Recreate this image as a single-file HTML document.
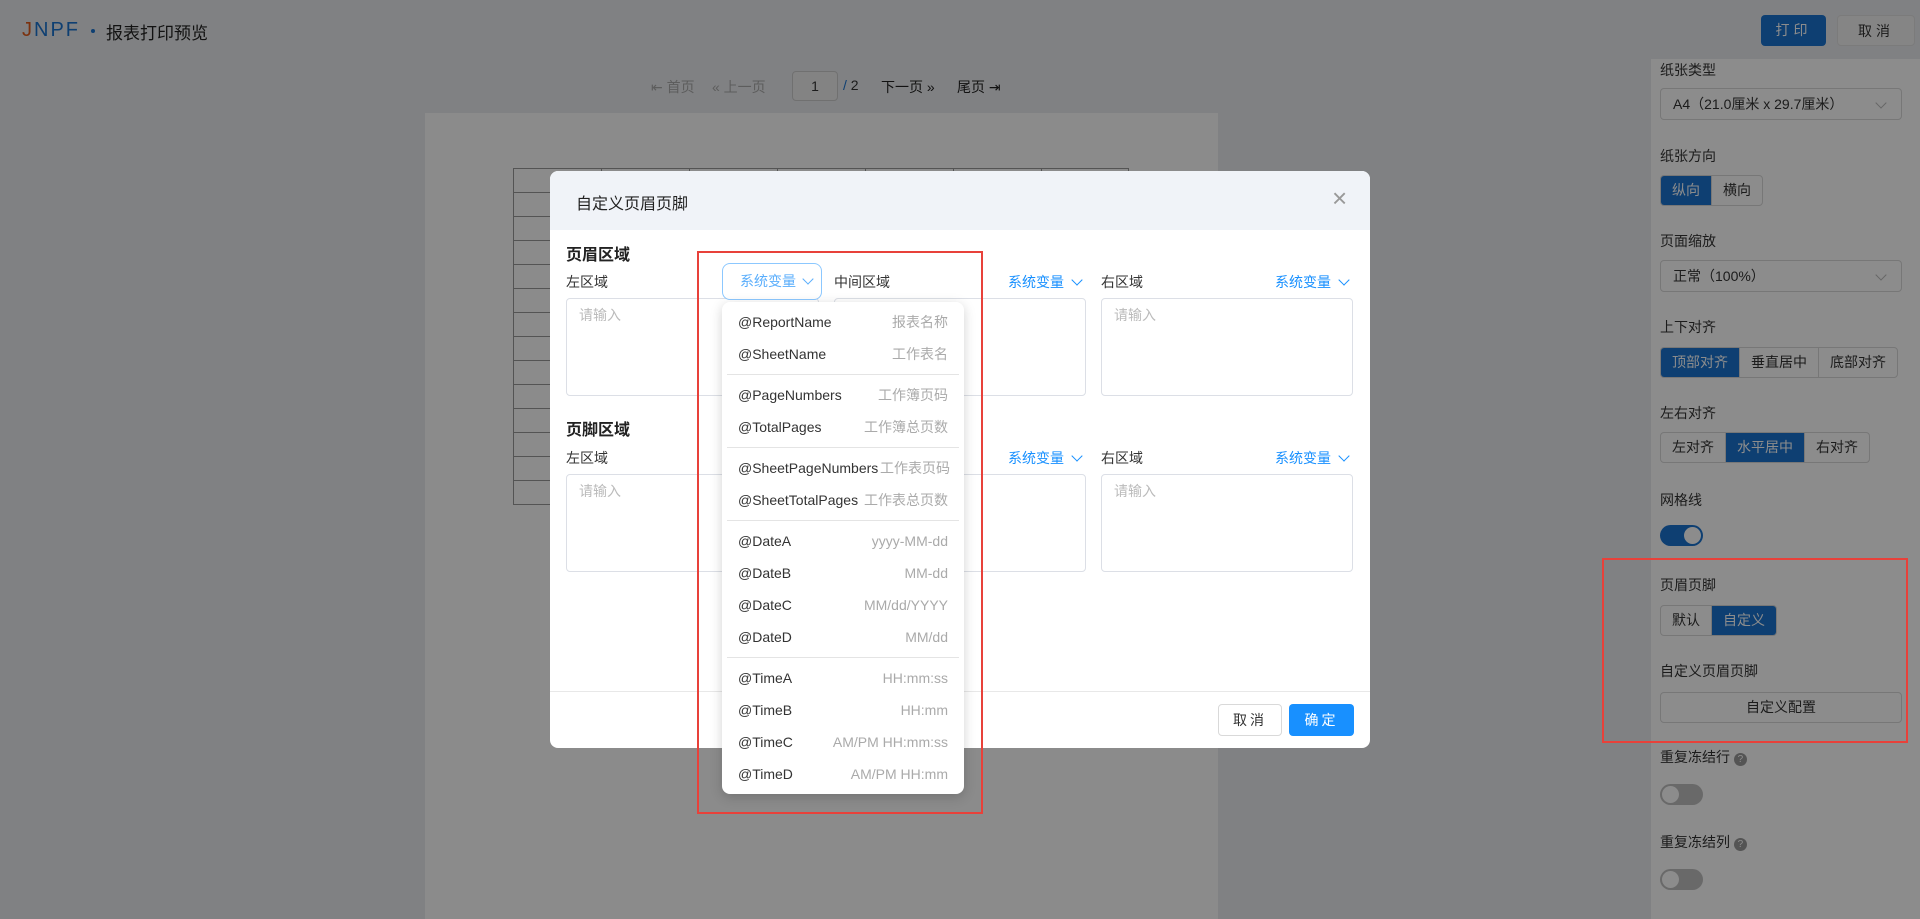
<!DOCTYPE html>
<html><head><meta charset="utf-8">
<style>
*{box-sizing:border-box;margin:0;padding:0}
body{width:1920px;height:919px;overflow:hidden;position:relative;background:#e9ebee;font-family:"Liberation Sans","Noto Sans CJK SC",sans-serif;font-size:14px;color:#333}
.a{position:absolute}
.btn{position:absolute;border-radius:4px;text-align:center;font-size:14px}
.lbl{position:absolute;font-size:14px;color:#333;line-height:20px}
.seg{position:absolute;display:flex;border:1px solid #d9d9d9;border-radius:4px;overflow:hidden;height:31px}
.seg div{padding:0 11px;line-height:29px;border-left:1px solid #d9d9d9;font-size:14px;color:#333}
.seg div:first-child{border-left:none}
.seg .on{background:#1a73d0;color:#fff}
.sel{position:absolute;border:1px solid #d9d9d9;border-radius:4px;height:32px;line-height:30px;padding-left:12px;font-size:14px;background:#fff}
.sel:after{content:"";position:absolute;right:16px;top:10px;width:7px;height:7px;border-right:1px solid #bbb;border-bottom:1px solid #bbb;transform:rotate(45deg)}
.sw{position:absolute;width:43px;height:21px;border-radius:11px;background:#bfbfbf}
.sw:after{content:"";position:absolute;top:2px;left:2px;width:17px;height:17px;border-radius:50%;background:#fff}
.sw.on{background:#1a73d0}.sw.on:after{left:24px}
.ta{position:absolute;border:1px solid #dcdfe6;border-radius:4px;background:#fff;color:#bbb;padding:6px 12px;font-size:14px;line-height:20px}
.sv{position:absolute;color:#1890ff;font-size:14px;line-height:20px}
.chev{display:inline-block;width:8px;height:8px;border-right:1.5px solid #1890ff;border-bottom:1.5px solid #1890ff;transform:rotate(45deg);margin-left:9px;position:relative;top:-3px}
.dd div.it{height:32px;display:flex;justify-content:space-between;align-items:center;padding:0 16px;font-size:14px;color:#333}
.dd div.it span{color:#aaa}
.dd .hr{height:1px;background:#e4e4e4;margin:4px 5px}
</style></head><body>
<div class="a" style="left:22px;top:19px;font-size:20px;letter-spacing:2px;color:#1a73d0;font-family:'Liberation Sans',sans-serif"><span style="color:#e05a1a">J</span>NPF</div>
<div class="a" style="left:91px;top:29px;width:4px;height:4px;border-radius:50%;background:#1a73d0"></div>
<div class="a" style="left:106px;top:19px;font-size:17px;color:#222">报表打印预览</div>
<div class="btn" style="left:1761px;top:15px;width:65px;height:31px;line-height:31px;background:#1a73d0;color:#fff;letter-spacing:4px">打印</div>
<div class="btn" style="left:1837px;top:15px;width:78px;height:31px;line-height:31px;background:#f3f3f3;border:1px solid #e0e0e0;letter-spacing:4px">取消</div>
<div class="a" style="left:651px;top:77px;color:#aaa;font-size:14px">⇤ 首页</div>
<div class="a" style="left:712px;top:77px;color:#aaa;font-size:14px">« 上一页</div>
<div class="a" style="left:792px;top:71px;width:46px;height:30px;border:1px solid #ccc;border-radius:4px;background:#eee;text-align:center;line-height:28px">1</div>
<div class="a" style="left:843px;top:77px;font-size:14px"><span style="color:#1a73d0">/</span> 2</div>
<div class="a" style="left:881px;top:77px;font-size:14px;color:#222">下一页 »</div>
<div class="a" style="left:957px;top:77px;font-size:14px;color:#222">尾页 ⇥</div>
<div class="a" style="left:425px;top:113px;width:793px;height:806px;background:#fefefe"></div>
<div class="a" style="left:513px;top:168px;width:616px;height:337px;background-image:linear-gradient(#999 1px,transparent 1px),linear-gradient(90deg,#999 1px,transparent 1px);background-size:88px 24px;border-right:1px solid #999;border-bottom:1px solid #999"></div>
<div class="a" style="left:1651px;top:59px;width:269px;height:860px;background:#fff"></div>
<div class="lbl" style="left:1660px;top:60px">纸张类型</div>
<div class="sel" style="left:1660px;top:88px;width:242px">A4（21.0厘米 x 29.7厘米）</div>
<div class="lbl" style="left:1660px;top:146px">纸张方向</div>
<div class="seg" style="left:1660px;top:175px"><div class="on">纵向</div><div>横向</div></div>
<div class="lbl" style="left:1660px;top:231px">页面缩放</div>
<div class="sel" style="left:1660px;top:260px;width:242px">正常（100%）</div>
<div class="lbl" style="left:1660px;top:317px">上下对齐</div>
<div class="seg" style="left:1660px;top:347px"><div class="on">顶部对齐</div><div>垂直居中</div><div>底部对齐</div></div>
<div class="lbl" style="left:1660px;top:403px">左右对齐</div>
<div class="seg" style="left:1660px;top:432px"><div>左对齐</div><div class="on">水平居中</div><div>右对齐</div></div>
<div class="lbl" style="left:1660px;top:490px">网格线</div>
<div class="sw on" style="left:1660px;top:525px"></div>
<div class="lbl" style="left:1660px;top:575px">页眉页脚</div>
<div class="seg" style="left:1660px;top:605px"><div>默认</div><div class="on">自定义</div></div>
<div class="lbl" style="left:1660px;top:661px">自定义页眉页脚</div>
<div class="a" style="left:1660px;top:692px;width:242px;height:31px;border:1px solid #d9d9d9;border-radius:4px;text-align:center;line-height:29px">自定义配置</div>
<div class="lbl" style="left:1660px;top:747px">重复冻结行 <span style="display:inline-block;width:13px;height:13px;border-radius:50%;background:#999;color:#fff;font-size:10px;text-align:center;line-height:13px">?</span></div>
<div class="sw" style="left:1660px;top:784px"></div>
<div class="lbl" style="left:1660px;top:832px">重复冻结列 <span style="display:inline-block;width:13px;height:13px;border-radius:50%;background:#999;color:#fff;font-size:10px;text-align:center;line-height:13px">?</span></div>
<div class="sw" style="left:1660px;top:869px"></div>
<div class="a" style="left:0;top:0;width:1920px;height:919px;background:rgba(0,0,0,0.45)"></div>
<div class="a" style="left:550px;top:171px;width:820px;height:577px;background:#fff;border-radius:8px;overflow:hidden">
 <div class="a" style="left:0;top:0;width:820px;height:59px;background:#f0f3f8"></div>
 <div class="a" style="left:26px;top:19px;font-size:16px;color:#222">自定义页眉页脚</div>
 <div class="a" style="left:782px;top:12px;font-size:26px;color:#999;font-weight:100">×</div>
 <div class="a" style="left:16px;top:70px;font-size:16px;font-weight:bold;color:#222">页眉区域</div>
 <div class="lbl" style="left:16px;top:101px">左区域</div>
 <div class="lbl" style="left:284px;top:101px">中间区域</div>
 <div class="sv" style="left:458px;top:101px">系统变量<i class="chev"></i></div>
 <div class="lbl" style="left:551px;top:101px">右区域</div>
 <div class="sv" style="left:725px;top:101px">系统变量<i class="chev"></i></div>
 <div class="ta" style="left:16px;top:127px;width:253px;height:98px">请输入</div>
 <div class="ta" style="left:284px;top:127px;width:252px;height:98px"></div>
 <div class="ta" style="left:551px;top:127px;width:252px;height:98px">请输入</div>
 <div class="a" style="left:16px;top:245px;font-size:16px;font-weight:bold;color:#222">页脚区域</div>
 <div class="lbl" style="left:16px;top:277px">左区域</div>
 <div class="sv" style="left:458px;top:277px">系统变量<i class="chev"></i></div>
 <div class="lbl" style="left:551px;top:277px">右区域</div>
 <div class="sv" style="left:725px;top:277px">系统变量<i class="chev"></i></div>
 <div class="ta" style="left:16px;top:303px;width:253px;height:98px">请输入</div>
 <div class="ta" style="left:284px;top:303px;width:252px;height:98px"></div>
 <div class="ta" style="left:551px;top:303px;width:252px;height:98px">请输入</div>
 <div class="a" style="left:0;top:520px;width:820px;height:1px;background:#e8e8e8"></div>
 <div class="btn" style="left:668px;top:533px;width:64px;height:32px;line-height:30px;border:1px solid #d9d9d9;letter-spacing:3px">取消</div>
 <div class="btn" style="left:739px;top:533px;width:65px;height:32px;line-height:32px;background:#1890ff;color:#fff;letter-spacing:3px">确定</div>
</div>
<div class="a" style="left:722px;top:263px;width:100px;height:37px;border:1px solid #8cc8ff;border-radius:8px;background:#fff;color:#5aaefc;padding-left:17px;line-height:35px;font-size:14px">系统变量<i class="chev" style="border-color:#5aaefc;margin-left:8px"></i></div>
<div class="a dd" style="left:722px;top:302px;width:242px;height:492px;background:#fff;border-radius:8px;box-shadow:0 3px 12px rgba(0,0,0,.18);padding-top:4px">
 <div class="it">@ReportName<span>报表名称</span></div>
 <div class="it">@SheetName<span>工作表名</span></div>
 <div class="hr"></div>
 <div class="it">@PageNumbers<span>工作簿页码</span></div>
 <div class="it">@TotalPages<span>工作簿总页数</span></div>
 <div class="hr"></div>
 <div class="it" style="padding-right:14px">@SheetPageNumbers<span>工作表页码</span></div>
 <div class="it">@SheetTotalPages<span>工作表总页数</span></div>
 <div class="hr"></div>
 <div class="it">@DateA<span>yyyy-MM-dd</span></div>
 <div class="it">@DateB<span>MM-dd</span></div>
 <div class="it">@DateC<span>MM/dd/YYYY</span></div>
 <div class="it">@DateD<span>MM/dd</span></div>
 <div class="hr"></div>
 <div class="it">@TimeA<span>HH:mm:ss</span></div>
 <div class="it">@TimeB<span>HH:mm</span></div>
 <div class="it">@TimeC<span>AM/PM HH:mm:ss</span></div>
 <div class="it">@TimeD<span>AM/PM HH:mm</span></div>
</div>
<div class="a" style="left:697px;top:251px;width:286px;height:563px;border:2px solid #e8413a"></div>
<div class="a" style="left:1602px;top:558px;width:306px;height:185px;border:2px solid #e8413a"></div>
</body></html>
